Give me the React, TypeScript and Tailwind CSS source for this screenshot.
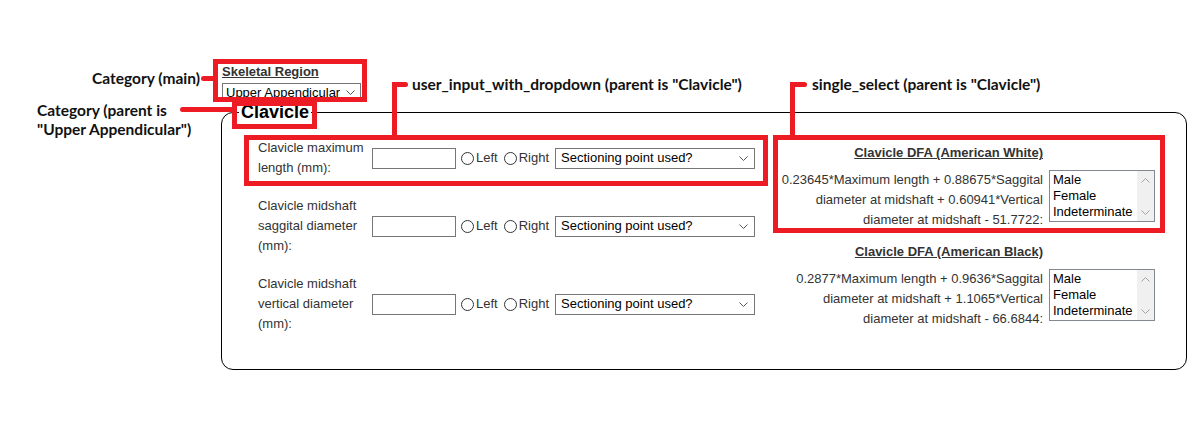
import React from "react";

function Chevron({ color = "#555" }: { color?: string }) {
  return (
    <svg width="9" height="5" viewBox="0 0 9 5" className="shrink-0">
      <path d="M0.5 0.5 L4.5 4.5 L8.5 0.5" fill="none" stroke={color} strokeWidth="1" />
    </svg>
  );
}

function Radio({ className }: { className?: string }) {
  return (
    <span
      className={
        "block w-[13px] h-[13px] rounded-full border border-[#333] bg-white shrink-0 " + (className ?? "")
      }
    />
  );
}

function MeasureRow({ label }: { label: string }) {
  return (
    <div className="flex items-center">
      <div className="w-[108px] mr-[6px] text-[13px] leading-[20px] text-[#333]">{label}</div>
      <input type="text" className="w-[84px] h-[21px] border border-[#767676] bg-white outline-none" />
      <Radio className="ml-[5px]" />
      <span className="ml-[2px] text-[13px] leading-[16px] text-[#333]">Left</span>
      <Radio className="ml-[6px]" />
      <span className="ml-[2px] text-[13px] leading-[16px] text-[#333]">Right</span>
      <div className="ml-[6px] w-[200px] h-[21px] border border-[#767676] bg-white flex items-center justify-between pl-[5px] pr-[6px] text-[13px] text-black">
        <span>Sectioning point used?</span>
        <Chevron />
      </div>
    </div>
  );
}

function ListBox() {
  return (
    <div className="w-[106px] h-[52px] border border-[#828790] bg-white flex">
      <div className="flex-1 pl-[3px] pt-[1px] text-[13px] leading-[16px] text-black">
        <div>Male</div>
        <div>Female</div>
        <div>Indeterminate</div>
      </div>
      <div className="w-[17px] bg-[#f0f0f0] flex flex-col justify-between items-center pt-[7px] pb-[6px]">
        <svg width="9" height="5" viewBox="0 0 9 5">
          <path d="M0.5 4.5 L4.5 0.5 L8.5 4.5" fill="none" stroke="#a3a3a3" strokeWidth="1" />
        </svg>
        <svg width="9" height="5" viewBox="0 0 9 5">
          <path d="M0.5 0.5 L4.5 4.5 L8.5 0.5" fill="none" stroke="#a3a3a3" strokeWidth="1" />
        </svg>
      </div>
    </div>
  );
}

function DfaBlock({ title, formula, className }: { title: string; formula: string; className?: string }) {
  return (
    <div className={"grid grid-cols-[265px_106px] gap-x-[6px] " + (className ?? "")}>
      <div className="text-right font-bold underline text-[13px] leading-[16px] text-[#333]">{title}</div>
      <div />
      <div className="mt-[9px] text-right text-[13px] leading-[20px] text-[#333]">{formula}</div>
      <div className="mt-[9px]">
        <ListBox />
      </div>
    </div>
  );
}

export default function App() {
  return (
    <div className="relative w-[1204px] h-[433px] bg-white overflow-hidden font-['Liberation_Sans',Arial,sans-serif]">
      <div className="pt-[64px] pl-[221px] w-[1187px]">
        <div className="pl-[1px]">
          <div className="text-[13px] leading-[16px] font-bold underline text-[#333]">Skeletal Region</div>
          <div className="mt-[3px] w-[139px] h-[19px] border border-[#767676] bg-white flex items-center justify-between pl-[3px] pr-[5px] text-[13px] text-black">
            <span>Upper Appendicular</span>
            <Chevron />
          </div>
        </div>
        <fieldset className="border border-black rounded-[12px] pl-[17px] pr-[31px] pt-[15px] pb-[35px]">
          <legend className="px-[2px] text-[18px] leading-[21px] font-bold text-black">Clavicle</legend>
          <div className="flex justify-between pl-[19px]">
            <div className="flex flex-col gap-[18px]">
              <MeasureRow label="Clavicle maximum length (mm):" />
              <MeasureRow label="Clavicle midshaft saggital diameter (mm):" />
              <MeasureRow label="Clavicle midshaft vertical diameter (mm):" />
            </div>
            <div className="pt-[7px]">
              <DfaBlock
                title="Clavicle DFA (American White)"
                formula="0.23645*Maximum length + 0.88675*Saggital diameter at midshaft + 0.60941*Vertical diameter at midshaft - 51.7722:"
              />
              <DfaBlock
                className="mt-[14px]"
                title="Clavicle DFA (American Black)"
                formula="0.2877*Maximum length + 0.9636*Saggital diameter at midshaft + 1.1065*Vertical diameter at midshaft - 66.6844:"
              />
            </div>
          </div>
        </fieldset>
      </div>

      {/* annotation overlay: red boxes */}
      <div className="absolute left-[213px] top-[59px] w-[154px] h-[43px] border-[5px] border-[#ed1c24]" />
      <div className="absolute left-[232px] top-[101px] w-[85px] h-[28px] border-[5px] border-[#ed1c24]" />
      <div className="absolute left-[244px] top-[135px] w-[524px] h-[51px] border-[5px] border-[#ed1c24]" />
      <div className="absolute left-[773px] top-[135px] w-[392px] h-[98px] border-[5px] border-[#ed1c24]" />

      {/* connectors */}
      <div className="absolute left-[201px] top-[76px] w-[13px] h-[5px] rounded-l-full bg-[#ed1c24]" />
      <div className="absolute left-[180px] top-[107px] w-[53px] h-[5px] rounded-l-full bg-[#ed1c24]" />
      <div className="absolute left-[392px] top-[82px] w-[5px] h-[54px] bg-[#ed1c24]" />
      <div className="absolute left-[392px] top-[82px] w-[16px] h-[5px] rounded-r-full bg-[#ed1c24]" />
      <div className="absolute left-[790px] top-[82px] w-[5px] h-[54px] bg-[#ed1c24]" />
      <div className="absolute left-[790px] top-[82px] w-[17px] h-[5px] rounded-r-full bg-[#ed1c24]" />

      {/* annotation labels */}
      <div className="absolute left-[92px] top-[69px] font-['Lato',sans-serif] font-bold text-[15.5px] leading-[18px] text-[#111] whitespace-nowrap">
        Category (main)
      </div>
      <div className="absolute left-[37px] top-[101px] font-['Lato',sans-serif] font-bold text-[15.5px] leading-[19px] text-[#111] whitespace-nowrap">
        <div>Category (parent is</div>
        <div>"Upper Appendicular")</div>
      </div>
      <div className="absolute left-[412px] top-[75px] font-['Lato',sans-serif] font-bold text-[15.5px] leading-[18px] text-[#111] whitespace-nowrap">
        user_input_with_dropdown (parent is "Clavicle")
      </div>
      <div className="absolute left-[812px] top-[75px] font-['Lato',sans-serif] font-bold text-[15.5px] leading-[18px] text-[#111] whitespace-nowrap">
        single_select (parent is "Clavicle")
      </div>
    </div>
  );
}
